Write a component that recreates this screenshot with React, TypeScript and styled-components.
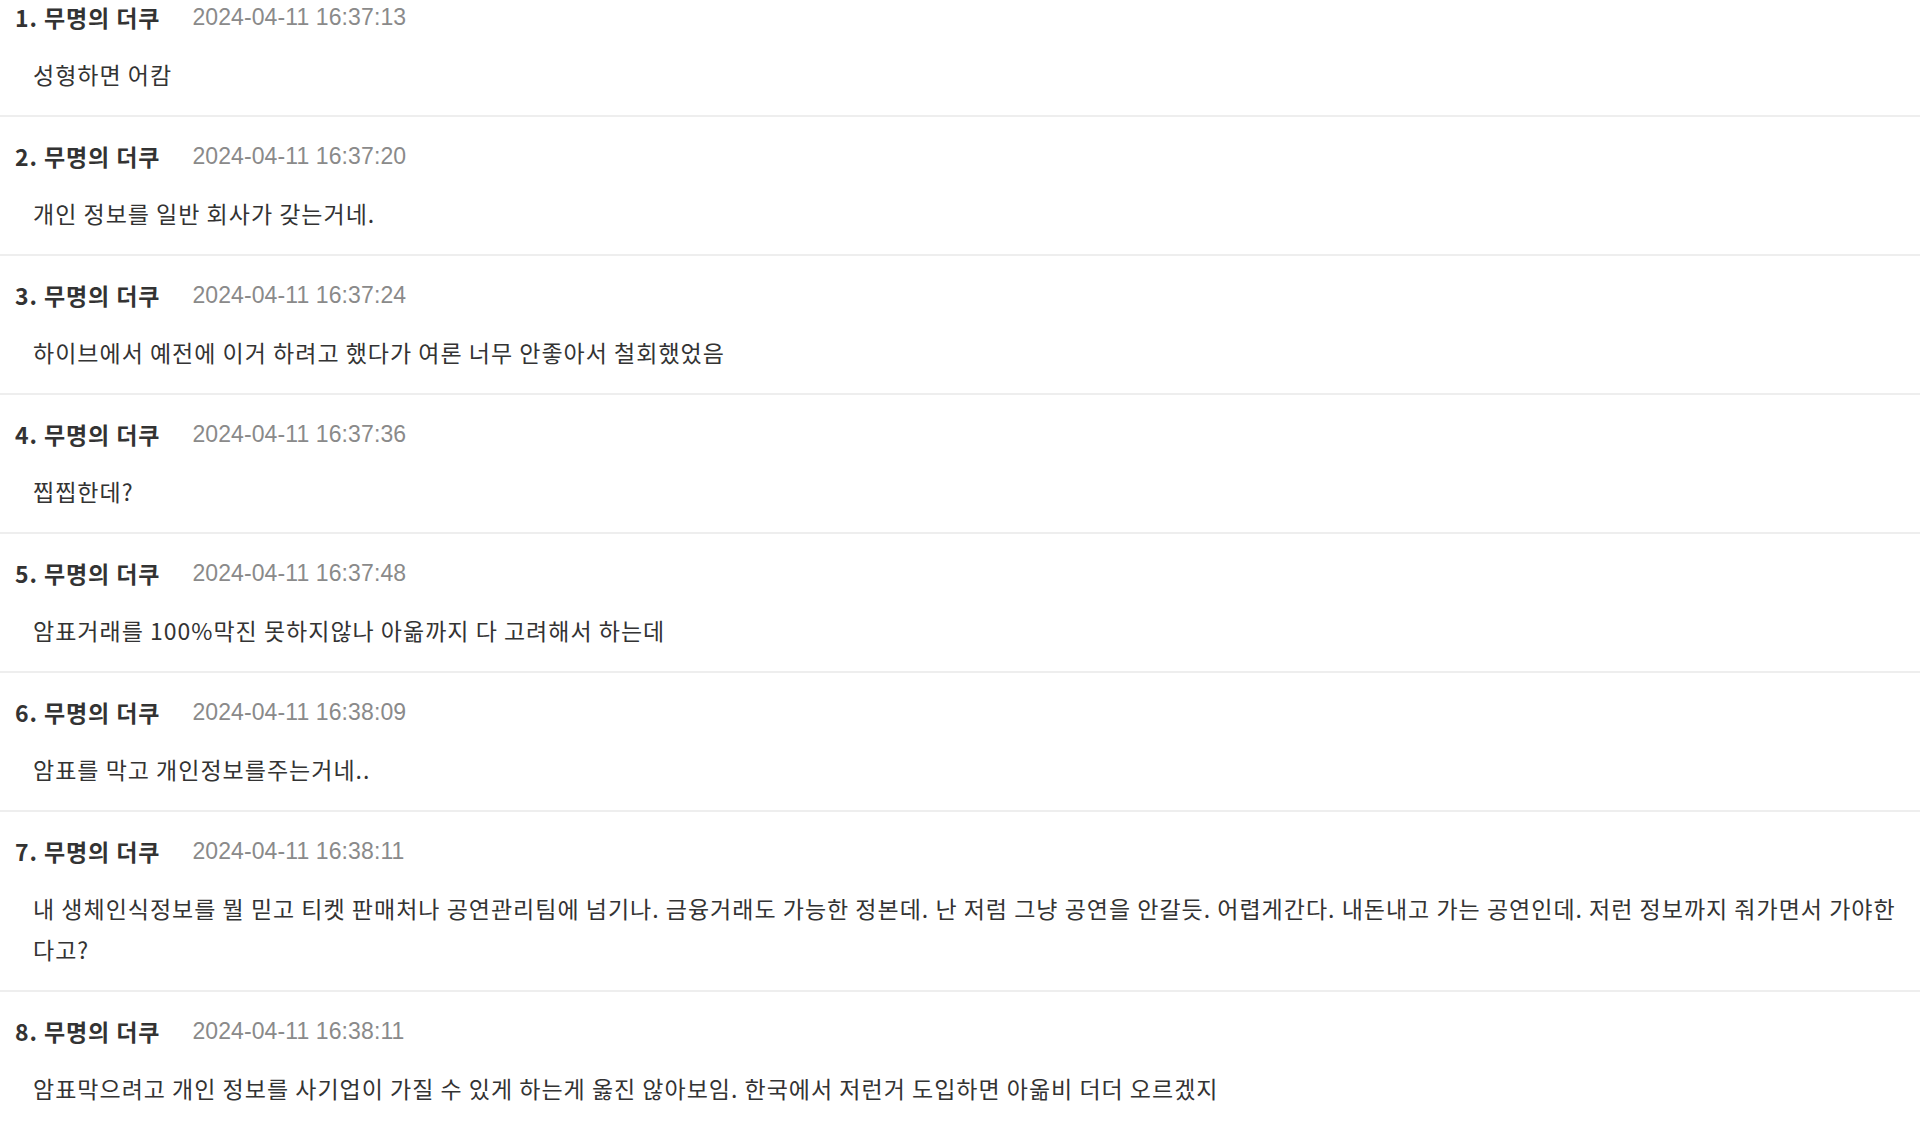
import React from "react";
import styled, { createGlobalStyle } from "styled-components";

const GlobalStyle = createGlobalStyle`
  html, body {
    margin: 0;
    padding: 0;
    background: #ffffff;
    overflow: hidden;
  }
  body {
    font-family: "Noto Sans CJK KR", "Noto Sans", sans-serif;
    color: #333333;
  }
`;

const List = styled.ul`
  list-style: none;
  margin: -22px 0 0 0;
  padding: 0;
`;

const Item = styled.li`
  padding: 23px 10px 20px 15px;
  border-bottom: 2px solid #eeeeee;
`;

const Header = styled.div`
  display: flex;
  align-items: center;
  gap: 32px;
  height: 32px;
`;

const Name = styled.span`
  font-family: "Noto Sans CJK KR", sans-serif;
  font-weight: 700;
  font-size: 23px;
  color: #333333;
  letter-spacing: 0.9px;
`;

const Time = styled.span`
  font-family: "Liberation Sans", Arial, sans-serif;
  font-size: 23px;
  color: #8a8a8a;
  letter-spacing: 0.1px;
`;

const Body = styled.p`
  margin: 21px 0 0 0;
  padding-left: 18px;
  font-family: "Noto Sans CJK KR", sans-serif;
  font-size: 23px;
  line-height: 41px;
  color: #333333;
  letter-spacing: 1px;
`;

const comments = [
  { time: "2024-04-11 16:37:13", text: "성형하면 어캄" },
  { time: "2024-04-11 16:37:20", text: "개인 정보를 일반 회사가 갖는거네." },
  { time: "2024-04-11 16:37:24", text: "하이브에서 예전에 이거 하려고 했다가 여론 너무 안좋아서 철회했었음" },
  { time: "2024-04-11 16:37:36", text: "찝찝한데?" },
  { time: "2024-04-11 16:37:48", text: "암표거래를 100%막진 못하지않나 아옮까지 다 고려해서 하는데" },
  { time: "2024-04-11 16:38:09", text: "암표를 막고 개인정보를주는거네.." },
  {
    time: "2024-04-11 16:38:11",
    text: "내 생체인식정보를 뭘 믿고 티켓 판매처나 공연관리팀에 넘기나. 금융거래도 가능한 정본데. 난 저럼 그냥 공연을 안갈듯. 어렵게간다. 내돈내고 가는 공연인데. 저런 정보까지 줘가면서 가야한다고?",
  },
  {
    time: "2024-04-11 16:38:11",
    text: "암표막으려고 개인 정보를 사기업이 가질 수 있게 하는게 옳진 않아보임. 한국에서 저런거 도입하면 아옮비 더더 오르겠지",
  },
];

export default function App() {
  return (
    <>
      <GlobalStyle />
      <List>
        {comments.map((c, i) => (
          <Item key={i}>
            <Header>
              <Name>{i + 1}. 무명의 더쿠</Name>
              <Time>{c.time}</Time>
            </Header>
            <Body>{c.text}</Body>
          </Item>
        ))}
      </List>
    </>
  );
}
